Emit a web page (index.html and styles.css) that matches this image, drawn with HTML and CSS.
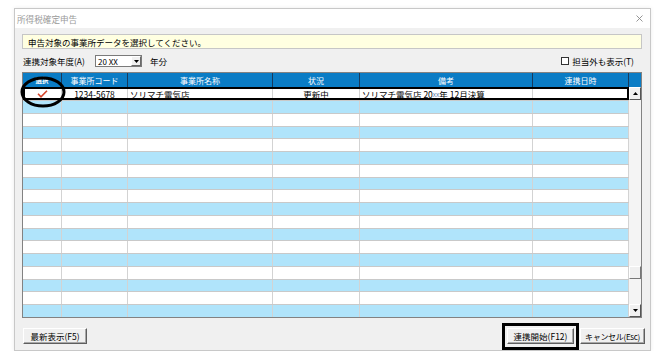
FILE: index.html
```html
<!DOCTYPE html>
<html lang="ja">
<head>
<meta charset="utf-8">
<title>所得税確定申告</title>
<link rel="stylesheet" href="styles.css">
</head>
<body>
<div class="window">
  <div class="titlebar">
    <span class="title">所得税確定申告</span>
    <svg class="close" width="7" height="7" viewBox="0 0 7 7"><path d="M0.5 0.5 L6.5 6.5 M6.5 0.5 L0.5 6.5" stroke="#8a8a8a" stroke-width="0.9" fill="none"/></svg>
  </div>
  <div class="content">
    <div class="msg">申告対象の事業所データを選択してください。</div>
    <div class="opts">
      <span class="lbl lbl-year">連携対象年度(A)</span>
      <div class="combo">
        <span class="combo-val">20 XX</span>
        <span class="combo-btn"><svg width="5" height="3" viewBox="0 0 5 3"><path d="M0 0 H5 L2.5 3 Z" fill="#000"/></svg></span>
      </div>
      <span class="lbl lbl-unit">年分</span>
      <span class="spacer"></span>
      <span class="chk"></span>
      <span class="lbl lbl-chk">担当外も表示(T)</span>
    </div>
    <div class="grid">
      <div class="hdr">
        <div class="hc hc-sel">選択</div>
        <div class="hc">事業所コード</div>
        <div class="hc">事業所名称</div>
        <div class="hc">状況</div>
        <div class="hc">備考</div>
        <div class="hc">連携日時</div>
        <div class="hc hc-end"></div>
      </div>
      <div class="body">
        <div class="rows">
          <div class="row sel">
            <div class="cell c"><svg width="11" height="8" viewBox="0 0 11 8"><polyline points="1,3.8 4,6.8 10,0.8" fill="none" stroke="#d5442a" stroke-width="1.6"/></svg></div>
            <div class="cell c">1234-5678</div>
            <div class="cell l">ソリマチ電気店</div>
            <div class="cell c">更新中</div>
            <div class="cell l">ソリマチ電気店 20<span class="xx">xx</span>年 12月決算</div>
            <div class="cell"></div>
          </div>
          <div class="row blue"><div class="cell"></div><div class="cell"></div><div class="cell"></div><div class="cell"></div><div class="cell"></div><div class="cell"></div></div>
          <div class="row"><div class="cell"></div><div class="cell"></div><div class="cell"></div><div class="cell"></div><div class="cell"></div><div class="cell"></div></div>
          <div class="row blue"><div class="cell"></div><div class="cell"></div><div class="cell"></div><div class="cell"></div><div class="cell"></div><div class="cell"></div></div>
          <div class="row"><div class="cell"></div><div class="cell"></div><div class="cell"></div><div class="cell"></div><div class="cell"></div><div class="cell"></div></div>
          <div class="row blue"><div class="cell"></div><div class="cell"></div><div class="cell"></div><div class="cell"></div><div class="cell"></div><div class="cell"></div></div>
          <div class="row"><div class="cell"></div><div class="cell"></div><div class="cell"></div><div class="cell"></div><div class="cell"></div><div class="cell"></div></div>
          <div class="row blue"><div class="cell"></div><div class="cell"></div><div class="cell"></div><div class="cell"></div><div class="cell"></div><div class="cell"></div></div>
          <div class="row"><div class="cell"></div><div class="cell"></div><div class="cell"></div><div class="cell"></div><div class="cell"></div><div class="cell"></div></div>
          <div class="row blue"><div class="cell"></div><div class="cell"></div><div class="cell"></div><div class="cell"></div><div class="cell"></div><div class="cell"></div></div>
          <div class="row"><div class="cell"></div><div class="cell"></div><div class="cell"></div><div class="cell"></div><div class="cell"></div><div class="cell"></div></div>
          <div class="row blue"><div class="cell"></div><div class="cell"></div><div class="cell"></div><div class="cell"></div><div class="cell"></div><div class="cell"></div></div>
          <div class="row"><div class="cell"></div><div class="cell"></div><div class="cell"></div><div class="cell"></div><div class="cell"></div><div class="cell"></div></div>
          <div class="row blue"><div class="cell"></div><div class="cell"></div><div class="cell"></div><div class="cell"></div><div class="cell"></div><div class="cell"></div></div>
          <div class="row"><div class="cell"></div><div class="cell"></div><div class="cell"></div><div class="cell"></div><div class="cell"></div><div class="cell"></div></div>
          <div class="row blue"><div class="cell"></div><div class="cell"></div><div class="cell"></div><div class="cell"></div><div class="cell"></div><div class="cell"></div></div>
          <div class="row"><div class="cell"></div><div class="cell"></div><div class="cell"></div><div class="cell"></div><div class="cell"></div><div class="cell"></div></div>
          <div class="row blue"><div class="cell"></div><div class="cell"></div><div class="cell"></div><div class="cell"></div><div class="cell"></div><div class="cell"></div></div>
        </div>
        <div class="vscroll">
          <div class="sbtn"><svg width="5" height="3" viewBox="0 0 5 3"><path d="M0 3 H5 L2.5 0 Z" fill="#000"/></svg></div>
          <div class="track"><div class="thumb"></div></div>
          <div class="sbtn"><svg width="5" height="3" viewBox="0 0 5 3"><path d="M0 0 H5 L2.5 3 Z" fill="#000"/></svg></div>
        </div>
      </div>
      <svg class="ring" width="46" height="32" viewBox="0 0 46 32"><ellipse cx="23" cy="16" rx="21" ry="14" fill="none" stroke="#000" stroke-width="3"/></svg>
    </div>
    <div class="btns">
      <div class="btn btn-refresh">最新表示(F5)</div>
      <span class="spacer"></span>
      <div class="mark"><div class="btn btn-start">連携開始(F12)</div></div>
      <div class="btn btn-cancel">キャンセル(Esc)</div>
    </div>
  </div>
</div>
</body>
</html>
```

FILE: styles.css
```css
html, body {
  margin: 0;
  background: #fff;
}
body {
  font-family: "Noto Sans CJK JP", "Noto Sans", sans-serif;
  font-size: 8.5px;
  color: #000;
}
.window {
  margin: 8px 0 0 14px;
  width: 637px;
  height: 343px;
  box-sizing: border-box;
  border: 1px solid #c8c8c8;
  display: flex;
  flex-direction: column;
  box-shadow: 0 0 4px rgba(0, 0, 0, 0.08);
}
.titlebar {
  height: 19px;
  flex: 0 0 19px;
  background: #fff;
  display: flex;
  align-items: center;
  justify-content: space-between;
  padding: 0 7px 0 2px;
  color: #9a9a9a;
  font-size: 8.6px;
}
.close {
  display: block;
}
.content {
  flex: 1;
  background: #f0f0f0;
  padding: 6px 8px 0 7px;
  display: flex;
  flex-direction: column;
}
.msg {
  height: 15px;
  box-sizing: border-box;
  border: 1px solid #c6c6c6;
  background: #ffffe1;
  padding-left: 5px;
  display: flex;
  align-items: center;
}
.opts {
  margin-top: 6px;
  height: 12px;
  display: flex;
  align-items: center;
}
.lbl {
  white-space: nowrap;
}
.lbl-year {
  width: 73px;
  padding-left: 1px;
  box-sizing: border-box;
}
.combo {
  width: 47px;
  height: 12px;
  box-sizing: border-box;
  border: 1px solid #7a7a7a;
  background: #fff;
  display: flex;
  align-items: center;
}
.combo-val {
  flex: 1;
  padding-left: 2px;
  font-size: 8px;
}
.combo-btn {
  width: 10px;
  height: 10px;
  box-sizing: border-box;
  background: #f0f0f0;
  border: 1px solid;
  border-color: #fff #6a6a6a #6a6a6a #fff;
  display: flex;
  align-items: center;
  justify-content: center;
}
.combo-btn svg, .sbtn svg {
  display: block;
}
.lbl-unit {
  margin-left: 8px;
}
.spacer {
  flex: 1;
}
.chk {
  width: 8px;
  height: 8px;
  box-sizing: border-box;
  border: 1px solid #333;
  background: #fff;
  margin-right: 3px;
}
.lbl-chk {
  margin-right: 8px;
}
.grid {
  margin-top: 5px;
  height: 246px;
  flex: 0 0 246px;
  box-sizing: border-box;
  border: 1px solid #828282;
  position: relative;
  display: flex;
  flex-direction: column;
  background: #fff;
}
.hdr {
  height: 14px;
  flex: 0 0 14px;
  display: grid;
  grid-template-columns: 39px 66px 145px 87px 173px 96px 12px;
  background: #0a7cc5;
  color: #fff;
  font-size: 8px;
}
.hc {
  border-right: 1px solid #173a5c;
  display: flex;
  align-items: center;
  justify-content: center;
  white-space: nowrap;
  overflow: hidden;
}
.hc-sel {
  font-size: 6.5px;
  font-weight: bold;
}
.hc-end {
  border-right: none;
}
.body {
  flex: 1;
  display: flex;
  min-height: 0;
}
.rows {
  width: 606px;
  display: flex;
  flex-direction: column;
}
.row {
  flex: 1;
  min-height: 0;
  display: grid;
  grid-template-columns: 39px 66px 145px 87px 173px 96px;
  border-top: 1px solid #c9c9c9;
  box-sizing: border-box;
  background: #fff;
}
.row.blue {
  background: #b0e4fb;
}
.row.sel {
  flex: 0 0 13px;
  border-top: none;
  outline: 2px solid #000;
  outline-offset: -2px;
}
.cell {
  border-right: 1px solid #d3d3d3;
  display: flex;
  align-items: center;
  overflow: hidden;
  white-space: nowrap;
}
.cell.c {
  justify-content: center;
}
.cell.l {
  padding-left: 2px;
}
.xx {
  font-size: 6.5px;
  color: #5878a8;
}
.vscroll {
  flex: 1;
  display: flex;
  flex-direction: column;
  background: #f0f0f0;
}
.sbtn {
  height: 13px;
  flex: 0 0 13px;
  box-sizing: border-box;
  background: #f0f0f0;
  border: 1px solid;
  border-color: #fff #555 #555 #fff;
  display: flex;
  align-items: center;
  justify-content: center;
}
.track {
  flex: 1;
  display: flex;
  flex-direction: column;
  justify-content: flex-end;
  padding-bottom: 25px;
  background: #f4f4f4;
}
.thumb {
  height: 13px;
  box-sizing: border-box;
  background: #f0f0f0;
  border: 1px solid;
  border-color: #fff #777 #777 #fff;
}
.ring {
  position: absolute;
  left: -3px;
  top: 3px;
  display: block;
}
.btns {
  margin-top: 10px;
  height: 16px;
  display: flex;
  align-items: stretch;
}
.btn {
  box-sizing: border-box;
  height: 16px;
  background: #f0f0f0;
  border: 1px solid;
  border-color: #fff #5e5e5e #5e5e5e #fff;
  box-shadow: inset -1px -1px 0 #a8a8a8;
  display: flex;
  align-items: center;
  justify-content: center;
  white-space: nowrap;
}
.btn-refresh {
  width: 64px;
  margin-left: 1px;
}
.mark {
  position: relative;
  display: flex;
}
.mark::after {
  content: "";
  position: absolute;
  left: -5px;
  top: -5px;
  right: -5px;
  bottom: -6px;
  border: 3px solid #000;
}
.btn-start {
  width: 67px;
}
.btn-cancel {
  width: 65px;
  margin-left: 6px;
  margin-right: -3px;
  font-size: 8px;
  letter-spacing: -0.3px;
  overflow: hidden;
}
```
